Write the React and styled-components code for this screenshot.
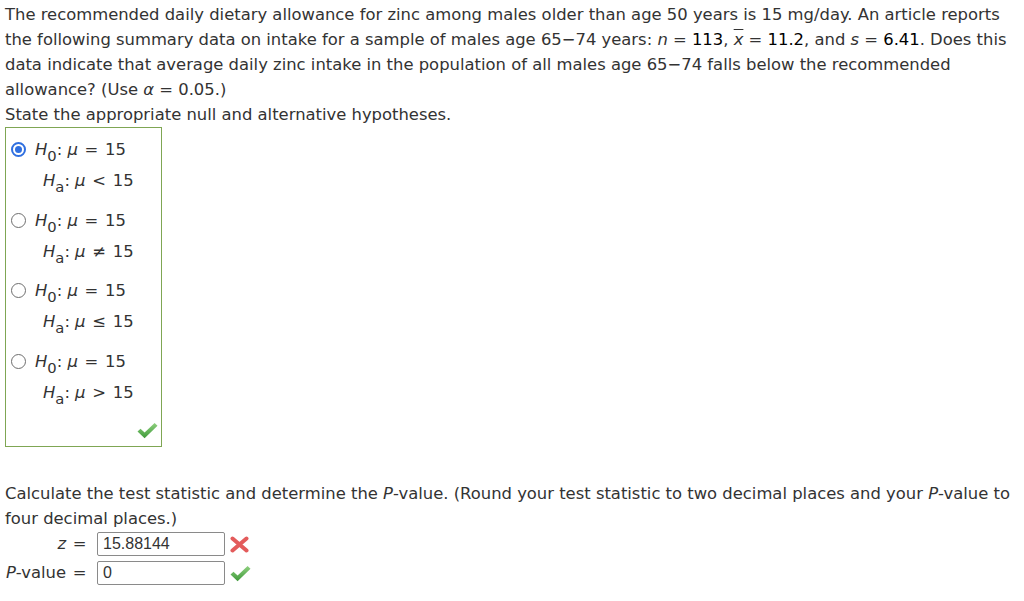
import React from "react";
import styled, { createGlobalStyle } from "styled-components";

const Global = createGlobalStyle`
  html, body { margin: 0; padding: 0; background: #fff; }
  body {
    font-family: "DejaVu Sans", Verdana, sans-serif;
    font-size: 16.4px;
    line-height: 25px;
    color: #333;
  }
`;

const Page = styled.div`
  padding: 1.5px 0 0 5px;
`;

const Para = styled.p`
  margin: 0;
`;

const Num = styled.span`
  color: #000;
`;

const Var = styled.i`
  font-style: italic;
`;

const Op = styled.span`
  padding: 0 1.5px;
`;

const Bar = styled.span`
  text-decoration: overline;
  font-style: italic;
`;

const Sub = styled.sub`
  font-size: 0.9em;
  vertical-align: -0.4em;
  line-height: 0;
  font-style: normal;
`;

const Box = styled.div`
  margin-top: 0.5px;
  width: 155px;
  border: 1px solid #7fa653;
  padding: 6px 0 7px 0;
  display: flex;
  flex-direction: column;
`;

const Options = styled.div`
  display: flex;
  flex-direction: column;
  gap: 8.7px;
`;

const Option = styled.div`
  display: flex;
  align-items: flex-start;
`;

const Radio = styled.span`
  box-sizing: border-box;
  flex: none;
  width: 15px;
  height: 15px;
  margin: 8px 9px 0 5px;
  border-radius: 50%;
  border: ${(p) => (p.$checked ? "2px solid #2f6fe0" : "1px solid #6e6e6e")};
  display: flex;
  align-items: center;
  justify-content: center;
  &::after {
    content: "";
    display: ${(p) => (p.$checked ? "block" : "none")};
    width: 7px;
    height: 7px;
    border-radius: 50%;
    background: #2f6fe0;
  }
`;

const Hyp = styled.div`
  display: flex;
  flex-direction: column;
`;

const HLine = styled.div`
  line-height: 31px;
  padding-left: ${(p) => (p.$indent ? "8px" : "0")};
  white-space: nowrap;
`;

const CheckRow = styled.div`
  display: flex;
  justify-content: flex-end;
  padding-right: 3px;
  margin-top: 14px;
  height: 17px;
`;

const Section = styled.div`
  margin-top: 34px;
`;

const Grid = styled.div`
  display: grid;
  grid-template-columns: 83px 128px auto;
  column-gap: 9px;
  row-gap: 5px;
  align-items: center;
  margin-top: 1px;
`;

const Label = styled.div`
  text-align: right;
  white-space: nowrap;
  line-height: 24px;
`;

const Input = styled.div`
  box-sizing: border-box;
  height: 24px;
  border: 1px solid #8a8a8a;
  border-radius: 2px;
  padding: 0 5px;
  font-family: "Liberation Sans", Arial, sans-serif;
  font-size: 16px;
  line-height: 22px;
  color: #333;
`;

const Mark = styled.span`
  display: flex;
  align-items: center;
  margin-left: -4px;
`;

const CheckIcon = ({ id }) => (
  <svg width="21" height="17" viewBox="0 0 21 17">
    <defs>
      <linearGradient id={id} x1="0" y1="0" x2="0" y2="1">
        <stop offset="0" stopColor="#8fd07f" />
        <stop offset="1" stopColor="#3f9a3a" />
      </linearGradient>
    </defs>
    <path
      d="M0.5 9.5 L3.5 6.8 L7.6 10.6 L17.6 1 L20.5 3.8 L7.6 16.2 Z"
      fill={`url(#${id})`}
    />
  </svg>
);

const CrossIcon = () => (
  <svg width="19" height="17" viewBox="0 0 19 17">
    <path
      d="M2.5 2.5 L16.5 14.5 M16.5 2.5 L2.5 14.5"
      stroke="#e35b5b"
      strokeWidth="4"
      strokeLinecap="round"
    />
  </svg>
);

const options = [
  { rel: "<", checked: true },
  { rel: "≠" },
  { rel: "≤" },
  { rel: ">" },
];

export default function App() {
  return (
    <Page>
      <Global />
      <Para>
        The recommended daily dietary allowance for zinc among males older than age 50 years is 15 mg/day. An article reports
        <br />
        the following summary data on intake for a sample of males age 65−74 years: <Var>n</Var> = <Num>113</Num>,{" "}
        <Bar>x</Bar> = <Num>11.2</Num>, and <Var>s</Var> = <Num>6.41</Num>. Does this
        <br />
        data indicate that average daily zinc intake in the population of all males age 65−74 falls below the recommended
        <br />
        allowance? (Use <Var>α</Var> = 0.05.)
      </Para>
      <Para>State the appropriate null and alternative hypotheses.</Para>
      <Box>
        <Options>
          {options.map((o, i) => (
            <Option key={i}>
              <Radio $checked={o.checked} />
              <Hyp>
                <HLine>
                  <Var>H</Var>
                  <Sub>0</Sub>: <Var>μ</Var> <Op>=</Op> 15
                </HLine>
                <HLine $indent>
                  <Var>H</Var>
                  <Sub>a</Sub>: <Var>μ</Var> <Op>{o.rel}</Op> 15
                </HLine>
              </Hyp>
            </Option>
          ))}
        </Options>
        <CheckRow>
          <CheckIcon id="g1" />
        </CheckRow>
      </Box>
      <Section>
        <Para>
          Calculate the test statistic and determine the <Var>P</Var>-value. (Round your test statistic to two decimal places
          and your <Var>P</Var>-value to
          <br />
          four decimal places.)
        </Para>
        <Grid>
          <Label>
            <Var>z</Var> <Op>=</Op>
          </Label>
          <Input>15.88144</Input>
          <Mark>
            <CrossIcon />
          </Mark>
          <Label>
            <Var>P</Var>-value <Op>=</Op>
          </Label>
          <Input>0</Input>
          <Mark>
            <CheckIcon id="g2" />
          </Mark>
        </Grid>
      </Section>
    </Page>
  );
}
